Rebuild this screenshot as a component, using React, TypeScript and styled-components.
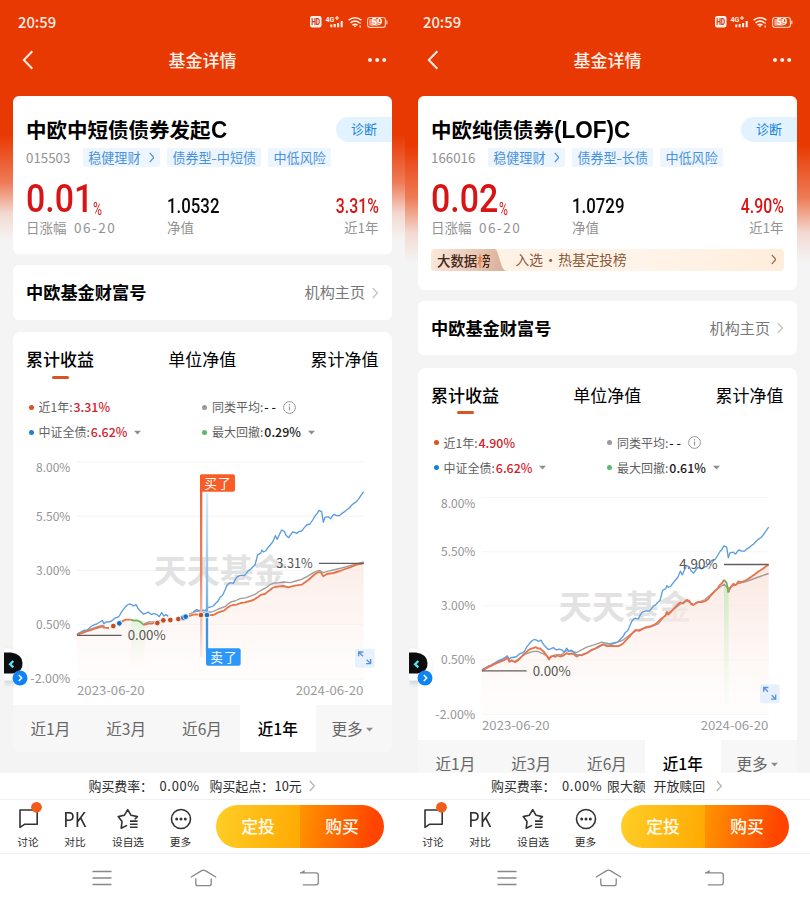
import React from "react";
import styled, { createGlobalStyle } from "styled-components";

const GlobalStyle = createGlobalStyle`
  *, *::before, *::after { box-sizing: border-box; }
  html, body { margin: 0; padding: 0; background: #f4f4f4; }
  body { font-family: "Noto Sans CJK SC", "Noto Sans", sans-serif; color: #000; overflow: hidden; }
`;

const Page = styled.div`
  display: grid;
  grid-template-columns: 405px 405px;
  width: 810px;
  height: 900px;
`;

const Phone = styled.section`
  position: relative;
  display: flex;
  flex-direction: column;
  width: 405px;
  height: 900px;
  overflow: hidden;
  background: #fff;
`;

const Body = styled.div<{ $fadeFrom: number; $fadeTo: number }>`
  height: 773px;
  overflow: hidden;
  padding: 0 13px;
  background: linear-gradient(
    #e93903 0,
    #e93903 ${(p) => p.$fadeFrom}px,
    #ee7b57 ${(p) => p.$fadeFrom + (p.$fadeTo - p.$fadeFrom) * 0.45}px,
    #f3d9d1 ${(p) => p.$fadeFrom + (p.$fadeTo - p.$fadeFrom) * 0.75}px,
    #f4f4f4 ${(p) => p.$fadeTo}px
  );
`;

const StatusBar = styled.div`
  display: flex;
  align-items: center;
  justify-content: space-between;
  height: 44px;
  padding: 0 3px 0 5px;
`;

const Clock = styled.span`
  color: #ffeee6;
  font-size: 14.8px;
  font-weight: 500;
  line-height: 20px;
`;

const NavBar = styled.header`
  display: grid;
  grid-template-columns: 40px 1fr 40px;
  align-items: center;
  height: 32px;
  margin-bottom: 20px;
  svg:last-child { justify-self: end; margin-right: 5px; }
`;

const NavTitle = styled.h1`
  margin: 0;
  text-align: center;
  color: #fff1e9;
  font-size: 17px;
  font-weight: 500;
  line-height: 32px;
`;

const Card = styled.div<{ $bottom?: number }>`
  background: #fff;
  border-radius: 6px;
  padding: 21px 0 ${(p) => p.$bottom ?? 0}px 13px;
  margin-bottom: 11.4px;
`;

const TitleRow = styled.div`
  display: flex;
  justify-content: space-between;
  align-items: flex-start;
  height: 25px;
`;

const FundName = styled.h2`
  margin: 0;
  font-size: 20.5px;
  font-weight: 700;
  line-height: 24px;
  white-space: nowrap;
`;

const FundLatin = styled.span`
  display: inline-block;
  font-family: "Liberation Sans", sans-serif;
  font-size: 23px;
  line-height: 20px;
  transform: scaleX(0.98);
  transform-origin: left center;
`;

const Diagnose = styled.span`
  width: 56px;
  height: 25px;
  border-radius: 13px 0 0 13px;
  background: #e2f3ff;
  color: #1884dd;
  font-size: 13px;
  line-height: 24px;
  padding-left: 15px;
`;

const TagRow = styled.div`
  display: flex;
  align-items: center;
  height: 19px;
  margin-top: 6px;
`;

const Code = styled.span`
  width: 57px;
  color: #929292;
  font-size: 13.3px;
  line-height: 18px;
`;

const Tag = styled.span`
  display: flex;
  align-items: center;
  height: 19px;
  padding: 0 5.2px;
  margin-right: 7px;
  border-radius: 2px;
  background: #edf6ff;
  color: #4a91dd;
  font-size: 13.1px;
  line-height: 18px;
  white-space: nowrap;
  svg { margin: 0 1px 0 8px; }
`;

const TagDash = styled.span`
  margin: 0 0.3px;
  transform: scaleX(1.3);
`;

const Figures = styled.div`
  display: grid;
  grid-template-columns: 141px 1fr auto;
  height: 50px;
  padding-right: 13.5px;
`;

const Digits = styled.span<{ $size: number; $stretch: number; $right?: boolean; $red?: boolean; $weight?: number }>`
  display: block;
  font-family: Roboto, sans-serif;
  font-size: ${(p) => p.$size}px;
  font-weight: ${(p) => p.$weight ?? 500};
  line-height: 1;
  color: ${(p) => (p.$red ? "#d91414" : "#0a0a0a")};
  transform: scaleX(${(p) => p.$stretch});
  transform-origin: ${(p) => (p.$right ? "right" : "left")} center;
`;

const DailyFigure = styled.div`
  display: flex;
  align-items: flex-start;
  width: 90px;
  padding-top: 13px;
`;

const DailyValue = styled.div<{ $width: number }>`
  width: ${(p) => p.$width}px;
  white-space: nowrap;
`;

const PercentSign = styled.div`
  padding-top: 20px;
`;

const SideFigure = styled.div`
  padding-top: 30px;
`;

const Labels = styled.div`
  display: grid;
  grid-template-columns: 141px 1fr auto;
  height: 20px;
  padding-right: 13.5px;
  color: #929292;
  font-size: 13.5px;
  line-height: 21px;
`;

const DateText = styled.span`
  margin-left: 7.5px;
  letter-spacing: 1.5px;
`;

const Promo = styled.div`
  display: flex;
  align-items: center;
  justify-content: space-between;
  height: 22.5px;
  margin: 11.5px 13px 0 -0.5px;
  padding-right: 8px;
  border-radius: 4px;
  overflow: hidden;
  background: linear-gradient(90deg, #fff0e2, #fff4e9 60%, #ffeddc);
  color: #8a5636;
`;

const PromoBadge = styled.span`
  width: 76px;
  height: 22.5px;
  padding-left: 6.5px;
  clip-path: path("M0 0 H62 Q66 0 67 4 L71 17 Q73 22 76 22.5 H0 Z");
  background: linear-gradient(100deg, #fbe9dc, #ecccb9 50%, #d7ad98);
  color: #42271b;
  font-size: 13.4px;
  font-weight: 500;
  line-height: 23px;
`;

const PromoAccent = styled.span`
  background: linear-gradient(90deg, #ee762e 42%, #42271b 46%);
  background-clip: text;
  color: transparent;
`;

const PromoText = styled.span`
  flex: 1;
  padding-left: 9px;
  font-size: 13.7px;
  line-height: 21px;
  word-spacing: -2.2px;
`;

const HouseCard = styled.div`
  display: flex;
  align-items: center;
  height: 54.5px;
  margin-bottom: 12.6px;
  padding: 0 14px 0 13px;
  border-radius: 6px;
  background: #fff;
`;

const HouseName = styled.strong`
  flex: 1;
  font-size: 17.2px;
  font-weight: 700;
  line-height: 22px;
  padding-bottom: 1px;
`;

const HouseLink = styled.span`
  margin-right: 7px;
  padding-bottom: 3px;
  color: #777;
  font-size: 15.1px;
  line-height: 22px;
`;

const ChartCard = styled.div`
  border-radius: 8px;
  overflow: hidden;
  background: #fff;
`;

const ChartTabs = styled.div`
  display: flex;
  justify-content: space-between;
  height: 62px;
  padding: 14px 13.5px 0 13px;
`;

const ChartTab = styled.div<{ $active?: boolean }>`
  display: flex;
  flex-direction: column;
  align-items: center;
  font-size: 17px;
  font-weight: ${(p) => (p.$active ? 500 : 400)};
  line-height: 25px;
  &::after {
    content: "";
    display: ${(p) => (p.$active ? "block" : "none")};
    width: 17px;
    height: 3px;
    margin-top: 4.5px;
    border-radius: 2px;
    background: #d8551f;
  }
`;

const Legend = styled.div`
  display: grid;
  grid-template-columns: 173.5px 1fr;
  grid-auto-rows: 25px;
  height: 55.5px;
  padding: 0.5px 0 0 15.5px;
`;

const LegendItem = styled.div`
  display: flex;
  align-items: center;
  color: #5f5f5f;
  font-size: 12px;
  line-height: 20px;
  white-space: nowrap;
  svg { margin-left: 7px; }
`;

const Dot = styled.i<{ $color: string }>`
  width: 5px;
  height: 5px;
  margin-right: 5px;
  border-radius: 50%;
  background: ${(p) => p.$color};
`;

const LegendValue = styled.b<{ $red?: boolean }>`
  margin-left: 1px;
  color: ${(p) => (p.$red ? "#d3202a" : "#181818")};
  font-size: 12.4px;
  font-weight: 500;
`;

const ChartSvg = styled.svg`
  display: block;
  width: 379px;
  height: 255px;
  font-family: "Noto Sans CJK SC", sans-serif;
`;

const Periods = styled.div`
  display: grid;
  grid-template-columns: repeat(5, 1fr);
  height: 47.3px;
  background: #f7f7f7;
`;

const Period = styled.div<{ $active?: boolean }>`
  display: flex;
  align-items: center;
  justify-content: center;
  gap: 3px;
  padding: 0 1px 2px 0;
  color: ${(p) => (p.$active ? "#000" : "#666")};
  background: ${(p) => (p.$active ? "#fff" : "transparent")};
  font-size: 15.6px;
  font-weight: ${(p) => (p.$active ? 500 : 400)};
  line-height: 24px;
  svg { margin: 3px 3px 0 0; }
`;

const Assistant = styled.svg`
  position: absolute;
  left: 4px;
  top: 640px;
  width: 34px;
  height: 54px;
`;

const FeeBar = styled.div<{ $shift: number }>`
  display: flex;
  align-items: center;
  height: 27px;
  padding-left: ${(p) => p.$shift}px;
  border-bottom: 1px solid #f1f1f1;
  color: #2c2c2c;
  font-size: 12.9px;
  line-height: 20px;
  white-space: pre;
`;

const FeeText = styled.span<{ $width: number; $spread?: boolean }>`
  width: ${(p) => p.$width}px;
  letter-spacing: ${(p) => (p.$spread ? 0.7 : 0)}px;
`;

const Actions = styled.div`
  display: flex;
  align-items: center;
  height: 53.5px;
  padding-left: 5px;
  border-bottom: 1px solid #f1f1f1;
`;

const Action = styled.div<{ $width: number }>`
  display: flex;
  flex-direction: column;
  align-items: center;
  width: ${(p) => p.$width}px;
  padding-top: 2px;
  color: #2c2c2c;
  font-size: 10.7px;
  line-height: 16px;
`;

const IconBox = styled.div`
  display: flex;
  align-items: center;
  justify-content: center;
  height: 28px;
  margin-bottom: 1px;
  svg { overflow: visible; }
`;

const PkMark = styled.span`
  font-size: 20px;
  line-height: 28px;
  color: #2c2c2c;
  transform: scaleX(0.9);
`;

const BuyGroup = styled.div`
  display: grid;
  grid-template-columns: 1fr 1fr;
  width: 168px;
  height: 43.5px;
  margin-left: 12px;
  border-radius: 22px;
  overflow: hidden;
  color: #fffaf0;
  font-size: 16.8px;
  font-weight: 500;
  line-height: 42px;
  text-align: center;
`;

const BuyButton = styled.div<{ $primary?: boolean }>`
  background: ${(p) =>
    p.$primary ? "linear-gradient(100deg, #ff9500, #ff4400 85%)" : "linear-gradient(100deg, #ffce27, #ffa902)"};
`;

const SystemNav = styled.div`
  display: grid;
  grid-template-columns: 98px 108.5px 20px;
  align-items: center;
  height: 46.5px;
  padding: 2px 0 0 92px;
`;

function Chevron({ size, color, width = 1.3 }: { size: number; color: string; width?: number }) {
  return (
    <svg width={size / 2} height={size} viewBox="0 0 6 12" fill="none" stroke={color} strokeWidth={width}>
      <path d="M.8 1 5.3 6 .8 11" />
    </svg>
  );
}

function Caret({ size = 8 }: { size?: number }) {
  return (
    <svg width={size} height={5} viewBox="0 0 8 5">
      <path d="M0 .5h8L4 4.7z" fill="#8d8d8d" />
    </svg>
  );
}

function StatusIcons() {
  return (
    <svg width="80" height="20" viewBox="309 12 80 20" fontFamily="Roboto, sans-serif">
      <rect x="310" y="16" width="11.5" height="11.5" rx="2.2" fill="#fff0e8" />
      <text x="311.2" y="25" fontSize="8.5" fontWeight="800" textLength="9" lengthAdjust="spacingAndGlyphs" fill="#c9421a">HD</text>
      <text x="325.5" y="22" fontSize="8" fontWeight="700" textLength="9" lengthAdjust="spacingAndGlyphs" fill="#fff0e8">4G</text>
      <path d="M335 18h4M337 16v4" stroke="#fff0e8" strokeWidth="1.1" />
      <path d="M331.3 27.3v-2.8M334.7 27.3v-3.4M338.1 27.3v-4.4M341.7 27.3V21" stroke="#fff0e8" strokeWidth="2.1" />
      <g fill="none" stroke="#fff0e8" strokeWidth="1.6">
        <path d="M348.6 20.2q6.4-5 12.8 0M350.5 22.8q4.5-3.6 9 0M352.5 25.2q2.5-2 5 0" />
      </g>
      <path d="M353.5 25.6h3l-1.5 2z" fill="#fff0e8" />
      <path d="M360.2 22.5v1.3M360.2 25.4v2.2" stroke="#fff0e8" strokeWidth="1.3" />
      <rect x="367.6" y="17.5" width="17.8" height="9.8" rx="2.4" fill="none" stroke="#ffc9b4" strokeWidth="1.2" />
      <rect x="369.2" y="19" width="9.5" height="6.8" rx="1" fill="#f7a283" />
      <path d="M386.8 20.5v3.8" stroke="#ffc9b4" strokeWidth="1.2" />
      <text x="371.6" y="25.3" fontSize="8.4" fontWeight="700" textLength="10.6" lengthAdjust="spacingAndGlyphs" fill="#fff">59</text>
    </svg>
  );
}

const INDEX_START =
  "231,554 236,549 245,545 252,541 262,540 268,534 275,528 284,524 290,522 300,516 307,511 312,521 318,516 325,516 335,513 345,504 352,502 358,498 365,485 375,472 382,465 388,462 395,464 400,468 408,464 413,473 418,480 424,486 430,492 437,490 445,486 450,491 455,493 462,491 470,493 478,500 485,488 492,498 498,494 505,499";
const INDEX_MID = "505,499 510,505 516,509 523,508 530,510 545,503 560,495 580,486 590,480 600,476";
const INDEX_RISE =
  "640,468 648,459 655,452 660,442 668,436 675,420 680,408 685,402 690,398 700,400 706,388 712,380 722,376 733,377 739,370 745,362 752,358 758,351 765,345 769,330 773,314 782,310 786,300 790,306 797,303 802,295 808,288 818,276 822,267 826,257 832,268 838,254 845,240 853,244 858,256 866,263 872,254 878,246 884,247 890,250 897,245 905,243 911,235 920,225 930,222 938,210 945,198 951,191 957,181 965,185 970,217 975,202 985,200 992,206 998,197 1002,193 1010,197 1018,197 1026,190 1035,184 1045,176 1055,166 1062,160 1068,156 1075,148 1083,136 1091,125";
const INDEX_END = `580,485 590,479 597,482 605,480 615,482 625,472 632,471 ${INDEX_RISE}`;
const INDEX_END_PURE = `600,476 615,475 625,472 632,471 ${INDEX_RISE}`;

const SHORT_A = "231,554 250,548 262,543 270,541 290,534 300,531 307,529 312,533 327,534";
const SHORT_B = "365,515 372,511 378,509 392,509";
const SHORT_DIP = "392,509 402,512 410,511 422,516 427,521 432,525";
const SHORT_C = "432,525 438,523 445,521 455,521 465,518";
const SHORT_D =
  "567,498 580,494 592,493 603,495 621,495 640,495 648,491 655,487 672,482 680,475 690,468 698,465 710,464 722,459 735,457 750,453 760,450 775,440 783,434 795,432 803,425 810,420 817,414 825,411 838,409 850,408 865,412 875,409 885,407 905,404 915,397 925,390 935,381 945,372 957,366 964,369 970,379 980,372 1000,369 1010,366 1020,363 1035,357 1050,352 1070,344 1091,340";
const SHORT_AVG_A = "231,554 262,541 290,531 307,526 315,529";
const SHORT_AVG_B = "432,521 445,516 465,515 480,512";
const SHORT_AVG_C =
  "567,492 580,487 590,484 600,483 610,487 635,486 645,482 655,477 675,470 685,461 695,455 705,453 720,446 740,443 755,437 765,433 775,426 787,419 800,412 810,404 822,399 838,398 850,396 870,398 888,393 905,388 922,379 940,368 957,361 970,368 982,364 1000,360 1025,354 1050,347 1070,342 1091,336";

const PURE_A =
  "231,573 240,567 250,562 262,556 275,550 288,545 300,540 308,534 313,546 320,541 330,547 337,543 345,536 352,528 360,520 368,513 375,508 384,505 392,502 399,506 405,506 415,514 421,522 427,530 432,539 438,530 445,528 450,531 457,527 465,530 475,527 485,520 492,523 500,521 505,522 515,530 523,526 530,525 545,520 560,510 570,506 580,500 595,493 605,499 620,498 640,499 648,495 655,490 664,480 672,472 682,460 692,450 702,453 712,448 722,442 735,440 745,436 755,430 765,420 775,412 781,408 786,396 790,404 798,396 808,385 818,374 826,368 834,371 845,360 852,363 858,372 865,376 873,369 880,366 890,367 900,364 909,358 915,350 922,342 930,333 938,326 945,315 951,310 957,300";
const PURE_DIP = "957,300 965,309 970,338";
const PURE_B =
  "970,338 975,326 980,318 985,312 992,316 1000,305 1008,307 1020,303 1030,297 1040,290 1050,283 1060,275 1075,266 1082,260 1091,254";
const PURE_AVG =
  "231,573 262,553 290,541 307,530 314,542 330,545 350,530 365,521 380,516 395,514 410,520 422,526 432,534 450,525 470,524 485,512 500,514 515,518 530,510 545,502 565,496 590,487 605,490 620,494 640,486 655,480 675,465 692,453 715,446 740,440 760,432 775,413 786,401 800,393 826,373 845,363 866,374 900,359 930,333 957,313 970,326 980,320 1000,311 1020,306 1040,299 1065,290 1091,281";

const ORANGE = "#e8734a";
const BLUE = "#5b9de0";
const GRAY = "#a29c99";
const GREEN = "#6fae4f";

function Line({ points, color, width = 4 }: { points: string; color: string; width?: number }) {
  return <polyline points={points} fill="none" stroke={color} strokeWidth={width} strokeLinejoin="round" />;
}

function Expand() {
  return (
    <g>
      <rect x="1065" y="596" width="59" height="57" rx="6" fill="#e6f1fd" />
      <path d="M1076 619V606h14M1077 607l12 12M1112 627v14h-14M1111 640l-11-11" fill="none" stroke="#5b92d4" strokeWidth="4" />
    </g>
  );
}

function Marker({ x, y, color }: { x: number; y: number; color: string }) {
  return <circle cx={x} cy={y} r="8.5" fill={color} stroke="#fff" strokeWidth="2.5" />;
}

function Chart({ kind }: { kind: "short" | "pure" }) {
  const short = kind === "short";
  const area = short
    ? `${SHORT_A} ${SHORT_B} ${SHORT_DIP} ${SHORT_C} ${SHORT_D} 1091,687 231,687`
    : `${PURE_A} ${PURE_DIP} ${PURE_B} 1091,704 231,704`;
  const ticks: [string, number, number][] = [
    ["8.00%", 36, 53],
    ["5.50%", 199, 199],
    ["3.00%", 361, 361],
    ["0.50%", 523, 523],
    ["-2.00%", 687, 687],
  ];
  return (
    <ChartSvg viewBox={short ? "39 0 1137 765" : "39 -1.5 1137 765"}>
      <defs>
        <linearGradient id={`area-${kind}`} gradientUnits="userSpaceOnUse" x1="0" y1="260" x2="0" y2="690">
          <stop offset="0" stopColor="#f9e1d9" stopOpacity=".8" />
          <stop offset="1" stopColor="#fffaf8" stopOpacity=".4" />
        </linearGradient>
        <linearGradient id={`dip-${kind}`} x1="0" y1="0" x2="0" y2="1">
          <stop offset="0" stopColor="#c4ecbd" stopOpacity=".85" />
          <stop offset="1" stopColor="#e5f6e0" stopOpacity=".1" />
        </linearGradient>
        <linearGradient id="buyPole" gradientUnits="userSpaceOnUse" x1="0" y1="130" x2="0" y2="620">
          <stop offset="0" stopColor="#e8653b" />
          <stop offset=".5" stopColor="#ea8768" />
          <stop offset="1" stopColor="#fdebe5" />
        </linearGradient>
        <linearGradient id="sellPole" gradientUnits="userSpaceOnUse" x1="0" y1="130" x2="0" y2="600">
          <stop offset="0" stopColor="#d8ecfb" />
          <stop offset=".6" stopColor="#86bdea" />
          <stop offset="1" stopColor="#2f96f0" />
        </linearGradient>
      </defs>
      {ticks.map(([label, y, labelY]) => (
        <g key={label}>
          <path d={`M231 ${y}h860`} stroke="#f5f4f4" strokeWidth="3" />
          <text
            x="211"
            y={labelY + 13}
            textAnchor="end"
            fontSize="35"
            fill="#939393"
            textLength={label.length > 5 ? 120 : 103}
            lengthAdjust="spacingAndGlyphs"
          >
            {label}
          </text>
        </g>
      ))}
      <text x="461" y="399" fontSize="98" fontWeight="700" fill="#e2e2e2" textLength="398" lengthAdjust="spacingAndGlyphs">
        天天基金
      </text>
      {short ? (
        <g>
          <polygon points={area} fill="url(#area-short)" />
          <rect x="393" y="511" width="40" height="140" fill="url(#dip-short)" opacity=".45" />
          <Line points={SHORT_AVG_A} color={GRAY} />
          <Line points={SHORT_AVG_B} color={GRAY} />
          <Line points={SHORT_AVG_C} color={GRAY} />
          <Line points={INDEX_START} color={BLUE} />
          <Line points={INDEX_END} color={BLUE} />
          <path d="M603.5 75v545" stroke="url(#buyPole)" strokeWidth="7" />
          <path d="M621 128v370" stroke="url(#sellPole)" strokeWidth="7" />
          <path d="M621 495v110" stroke="#3c94df" strokeWidth="7" />
          {[SHORT_A, SHORT_B, SHORT_C, SHORT_D].map((p) => (
            <Line key={p} points={p} color={ORANGE} width={5.5} />
          ))}
          <Line points={SHORT_DIP} color={GREEN} width={5} />
          {[[340, 528], [472, 519], [490, 511], [511, 510], [535, 507], [603, 495]].map(([x, y]) => (
            <Marker key={x} x={x} y={y} color="#bf4f24" />
          ))}
          {[[358, 520], [550, 503], [557, 500], [621, 495]].map(([x, y]) => (
            <Marker key={x} x={x} y={y} color="#1b6fbe" />
          ))}
          <path d="M600 126V78q0-5 5-5h94q6 0 6 6v40q0 6-6 6h-93z" fill="#fa5c25" />
          <text x="613" y="115" fontSize="38" fill="#fff" textLength="79">买了</text>
          <path d="M618 595h98q6 0 6 6v40q0 6-6 6h-92q-6 0-6-6z" fill="#2b97fa" />
          <text x="631" y="637" fontSize="38" fill="#fff" textLength="79">卖了</text>
          <path d="M957 340h134M231 556h134" stroke="#635c5c" strokeWidth="4" />
          <text x="829" y="355" fontSize="39" fill="#555" textLength="109" lengthAdjust="spacingAndGlyphs">3.31%</text>
        </g>
      ) : (
        <g>
          <g transform="translate(0 -17)">
            <polygon points={area} fill="url(#area-pure)" />
            <rect x="957" y="318" width="14" height="355" fill="url(#dip-pure)" />
            <Line points={PURE_AVG} color={GRAY} />
          </g>
          <Line points={INDEX_START} color={BLUE} />
          <Line points={INDEX_MID} color={BLUE} />
          <Line points={INDEX_END_PURE} color={BLUE} />
          <g transform="translate(0 -17)">
            <Line points={PURE_A} color={ORANGE} width={5.5} />
            <Line points={PURE_B} color={ORANGE} width={5.5} />
            <Line points={PURE_DIP} color={GREEN} width={5} />
            <path d="M957 254h134M231 573h134" stroke="#635c5c" strokeWidth="4" />
            <text x="823" y="269" fontSize="39" fill="#555" textLength="115" lengthAdjust="spacingAndGlyphs">4.90%</text>
          </g>
        </g>
      )}
      <text x="383" y="571" fontSize="39" fill="#555" textLength="114" lengthAdjust="spacingAndGlyphs">0.00%</text>
      <Expand />
      <text x="231" y="734" fontSize="35" fill="#999" textLength="203" lengthAdjust="spacingAndGlyphs">2023-06-20</text>
      <text x="887" y="734" fontSize="35" fill="#999" textLength="203" lengthAdjust="spacingAndGlyphs">2024-06-20</text>
    </ChartSvg>
  );
}

function AssistantHandle({ id }: { id: string }) {
  return (
    <Assistant viewBox="4 640 34 54">
      <defs>
        <filter id={`soft-${id}`} x="-50%" y="-50%" width="200%" height="200%">
          <feGaussianBlur stdDeviation="2" />
        </filter>
      </defs>
      <path d="M4 650h4q17 2 18 15t-13 19H4z" fill="#b4c0cc" opacity=".55" filter={`url(#soft-${id})`} />
      <path d="M4 648.5h6q17 3 17 16.5t-14 15.5H4z" fill="#fff" />
      <path d="M4 652.6h7q11 1.5 11.5 10.5T13 673.5H4z" fill="#0b0d10" />
      <path d="M13.3 661l-3.2 3.2 3.2 3.2" fill="none" stroke="#5fe3f2" strokeWidth="2.3" />
      <circle cx="20" cy="678" r="7.5" fill="#0d84f2" />
      <path d="M18.8 675l2.9 3-2.9 3" fill="none" stroke="#fff" strokeWidth="1.5" />
    </Assistant>
  );
}

interface Fund {
  id: "short" | "pure";
  name: string;
  latin: string;
  code: string;
  category: [string, string];
  daily: string;
  nav: string;
  year: string;
  drawdown: string;
  promo: boolean;
  fee: [string, number][];
  feeShift: number;
  fade: [number, number];
}

const funds: Fund[] = [
  {
    id: "short", name: "中欧中短债债券发起", latin: "C", code: "015503", category: ["债券型", "中短债"],
    daily: "0.01", nav: "1.0532", year: "3.31%", drawdown: "0.29%", promo: false,
    fee: [["购买费率：", 71], ["0.00%", 50], ["购买起点：", 65], ["10元", 34]], feeShift: 88.5, fade: [135, 240],
  },
  {
    id: "pure", name: "中欧纯债债券", latin: "(LOF)C", code: "166016", category: ["债券型", "长债"],
    daily: "0.02", nav: "1.0729", year: "4.90%", drawdown: "0.61%", promo: true,
    fee: [["购买费率：", 71], ["0.00%", 45], ["限大额", 46.5], ["开放赎回", 62]], feeShift: 86, fade: [145, 262],
  },
];

function FundScreen({ fund }: { fund: Fund }) {
  return (
    <Phone>
      <Body $fadeFrom={fund.fade[0]} $fadeTo={fund.fade[1]}>
        <StatusBar>
          <Clock>20:59</Clock>
          <StatusIcons />
        </StatusBar>
        <NavBar>
          <svg width="22" height="20" viewBox="0 0 22 20" fill="none" stroke="#ffeee6" strokeWidth="2">
            <path d="M19.3 1.2 10.8 10l8.5 8.8" />
          </svg>
          <NavTitle>基金详情</NavTitle>
          <svg width="20" height="6" viewBox="0 0 20 6" fill="#fff0e8">
            <circle cx="3" cy="3" r="2" />
            <circle cx="10.2" cy="3" r="2" />
            <circle cx="17.2" cy="3" r="2" />
          </svg>
        </NavBar>

        <Card $bottom={fund.promo ? 18.5 : 17}>
          <TitleRow>
            <FundName>{fund.name}<FundLatin>{fund.latin}</FundLatin></FundName>
            <Diagnose>诊断</Diagnose>
          </TitleRow>
          <TagRow>
            <Code>{fund.code}</Code>
            <Tag>稳健理财<Chevron size={11} color="#4a91dd" /></Tag>
            <Tag>{fund.category[0]}<TagDash>-</TagDash>{fund.category[1]}</Tag>
            <Tag>中低风险</Tag>
          </TagRow>
          <Figures>
            <DailyFigure>
              <DailyValue $width={fund.daily === "0.01" ? 66.5 : 68}>
                <Digits $size={38.5} $stretch={0.88} $red>{fund.daily}</Digits>
              </DailyValue>
              <PercentSign><Digits $size={18.5} $stretch={0.66} $red $weight={400}>%</Digits></PercentSign>
            </DailyFigure>
            <SideFigure><Digits $size={19.8} $stretch={0.85}>{fund.nav}</Digits></SideFigure>
            <SideFigure><Digits $size={19.8} $stretch={0.8} $red $right>{fund.year}</Digits></SideFigure>
          </Figures>
          <Labels>
            <span>日涨幅<DateText>06-20</DateText></span>
            <span>净值</span>
            <span>近1年</span>
          </Labels>
          {fund.promo && (
            <Promo>
              <PromoBadge>大数据<PromoAccent>榜</PromoAccent></PromoBadge>
              <PromoText>入选 · 热基定投榜</PromoText>
              <Chevron size={11} color="#9b6748" />
            </Promo>
          )}
        </Card>

        <HouseCard>
          <HouseName>中欧基金财富号</HouseName>
          <HouseLink>机构主页</HouseLink>
          <Chevron size={12} color="#c4c4c4" />
        </HouseCard>

        <ChartCard>
          <ChartTabs>
            <ChartTab $active>累计收益</ChartTab>
            <ChartTab>单位净值</ChartTab>
            <ChartTab>累计净值</ChartTab>
          </ChartTabs>
          <Legend>
            <LegendItem><Dot $color="#d9541f" />近1年:<LegendValue $red>{fund.year}</LegendValue></LegendItem>
            <LegendItem>
              <Dot $color="#999" />同类平均:<LegendValue>- -</LegendValue>
              <svg width="13" height="13" viewBox="0 0 13 13" fill="none" stroke="#999">
                <circle cx="6.5" cy="6.5" r="5.9" />
                <path d="M6.5 5.4v4.2M6.5 3.1v1.3" strokeWidth="1.2" />
              </svg>
            </LegendItem>
            <LegendItem><Dot $color="#1a80d9" />中证全债:<LegendValue $red>6.62%</LegendValue><Caret size={7} /></LegendItem>
            <LegendItem><Dot $color="#5fba67" />最大回撤:<LegendValue>{fund.drawdown}</LegendValue><Caret size={7} /></LegendItem>
          </Legend>
          <Chart kind={fund.id} />
          <Periods>
            <Period>近1月</Period>
            <Period>近3月</Period>
            <Period>近6月</Period>
            <Period $active>近1年</Period>
            <Period>更多<Caret size={7} /></Period>
          </Periods>
        </ChartCard>
      </Body>

      <FeeBar $shift={fund.feeShift}>
        {fund.fee.map(([text, width]) => (
          <FeeText key={text} $width={width} $spread={text === "0.00%"}>{text}</FeeText>
        ))}
        <Chevron size={12} color="#b5b5b5" />
      </FeeBar>
      <Actions>
        <Action $width={46}>
          <IconBox>
            <svg width="26" height="28" viewBox="15 806 26 28" fill="none" stroke="#333" strokeWidth="1.6">
              <path d="M20 811h17.2v14.2H24.8L20 828.4z" strokeLinejoin="round" />
              <circle cx="36.5" cy="808.3" r="5.4" fill="#f25c1b" stroke="none" />
            </svg>
          </IconBox>
          讨论
        </Action>
        <Action $width={48}><IconBox><PkMark>PK</PkMark></IconBox>对比</Action>
        <Action $width={58}>
          <IconBox>
            <svg width="22" height="22" viewBox="0 0 22 22" fill="none" stroke="#333" strokeWidth="1.6" strokeLinejoin="round" strokeLinecap="round">
              <path d="M9.5 17.6 4.2 20.2 5 13.6 1.2 8.6 7.3 7.3 10.7 1.6 14.1 7.3 20.4 8.6 18.3 10.8" />
              <path d="M13 13.1h7.6M13 16.2h7.6M13 19.3h7.6" strokeLinecap="butt" />
            </svg>
          </IconBox>
          设自选
        </Action>
        <Action $width={47}>
          <IconBox>
            <svg width="22" height="22" viewBox="0 0 22 22" fill="#333">
              <circle cx="11" cy="11" r="9.5" fill="none" stroke="#333" strokeWidth="1.6" />
              <circle cx="6.7" cy="11" r="1.5" />
              <circle cx="11" cy="11" r="1.5" />
              <circle cx="15.3" cy="11" r="1.5" />
            </svg>
          </IconBox>
          更多
        </Action>
        <BuyGroup>
          <BuyButton>定投</BuyButton>
          <BuyButton $primary>购买</BuyButton>
        </BuyGroup>
      </Actions>
      <SystemNav>
        <svg width="20" height="16" viewBox="0 0 20 16" stroke="#888" strokeWidth="1.4">
          <path d="M.5 1.5h19M.5 8h19M.5 14.5h19" />
        </svg>
        <svg width="27" height="18" viewBox="0 0 27 18" fill="none" stroke="#888" strokeWidth="1.3">
          <path d="M.8 8.2 11.7 1.6q1.8-1 3.6 0L26.2 8.2M5.8 9.5v5.2q0 2 2 2h11.4q2 0 2-2V9.5" />
        </svg>
        <svg width="21" height="17" viewBox="0 0 21 17" fill="none" stroke="#888" strokeWidth="1.3">
          <path d="M1 3.8h16q2.3 0 2.3 2.3v7.5q0 2.3-2.3 2.3H3.8" />
          <path d="M.8 4 5.6 1v3z" fill="#888" stroke="none" />
        </svg>
      </SystemNav>
      <AssistantHandle id={fund.id} />
    </Phone>
  );
}

export default function App() {
  return (
    <>
      <GlobalStyle />
      <Page>
        {funds.map((fund) => <FundScreen key={fund.id} fund={fund} />)}
      </Page>
    </>
  );
}
